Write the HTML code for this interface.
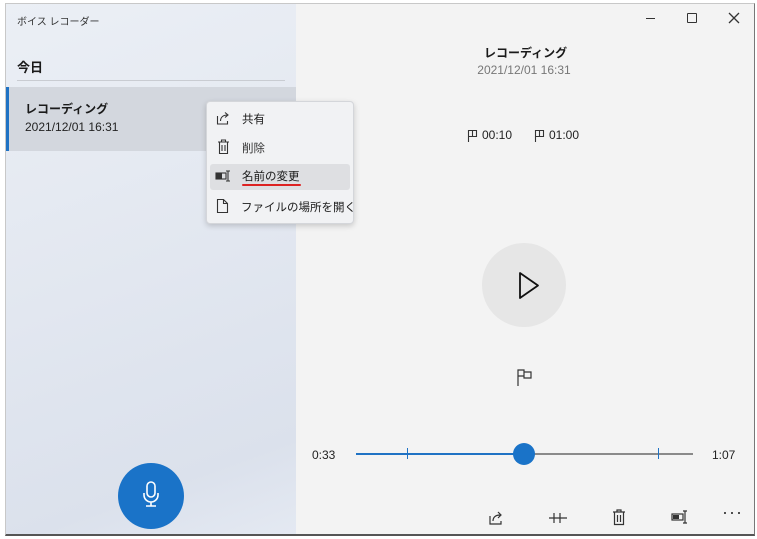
<!DOCTYPE html>
<html><head><meta charset="utf-8"><style>
*{margin:0;padding:0;box-sizing:border-box}
body{width:757px;height:539px;background:#fff;position:relative;overflow:hidden;font-family:"Liberation Sans","Noto Sans CJK JP",sans-serif;color:#1a1a1a}
.win{position:absolute;left:5px;top:3px;width:750px;height:533px;background:#f3f3f3;border:1px solid #c8c8c8;border-right:1px solid #777;border-bottom:2px solid #555;overflow:hidden}
.left{position:absolute;left:0;top:0;width:290px;height:100%;background:linear-gradient(160deg,#ebeff5 0%,#e2e7f0 50%,#dbe1ec 85%,#e4e9f2 100%)}
.abs{position:absolute;white-space:nowrap}
svg{position:absolute}
.mi{font-size:11.5px}
</style></head><body>
<div class="win">
 <div class="left">
  <div class="abs" style="left:11px;top:9px;font-size:10px;color:#333">ボイス レコーダー</div>
  <div class="abs" style="left:11px;top:53px;font-size:13px;font-weight:bold">今日</div>
  <div class="abs" style="left:11px;top:76px;width:268px;height:1px;background:#c9ccd2"></div>
  <div class="abs" style="left:0;top:83px;width:290px;height:64px;background:#d3d7de"></div>
  <div class="abs" style="left:0;top:83px;width:3px;height:64px;background:#1f72c4"></div>
  <div class="abs" style="left:19px;top:96px;font-size:12px;font-weight:bold">レコーディング</div>
  <div class="abs" style="left:19px;top:116px;font-size:12px;color:#222">2021/12/01 16:31</div>
  <div class="abs" style="left:112px;top:459px;width:66px;height:66px;border-radius:50%;background:#1a73c8"></div>
  <svg style="left:134px;top:476px" width="22" height="30" viewBox="0 0 22 30"><rect x="7" y="2" width="8" height="15" rx="4" fill="none" stroke="#fff" stroke-width="1.6"/><path d="M4 13v2a7 7 0 0 0 14 0v-2M11 22v4M6 26h10" fill="none" stroke="#fff" stroke-width="1.6"/></svg>
 </div>
 <div class="abs" style="left:640px;top:14px;width:9px;height:1px;background:#333"></div>
 <div class="abs" style="left:681px;top:9px;width:10px;height:10px;border:1.3px solid #333;border-radius:1px"></div>
 <svg style="left:722px;top:8px" width="12" height="12"><path d="M1 1L11 11M11 1L1 11" stroke="#333" stroke-width="1.3"/></svg>
 <div class="abs" style="left:478px;top:40px;font-size:12px;font-weight:bold;width:80px;text-align:center">レコーディング</div>
 <div class="abs" style="left:463px;top:59px;font-size:12px;color:#777;width:110px;text-align:center">2021/12/01 16:31</div>
 <svg style="left:461px;top:125px" width="12" height="14"><path d="M1.5 13V1.5h8v6h-8" fill="none" stroke="#333" stroke-width="1.1"/><path d="M5.5 1.5v6" stroke="#333" stroke-width="1.1"/></svg>
 <div class="abs" style="left:476px;top:124px;font-size:12px;color:#222">00:10</div>
 <svg style="left:528px;top:125px" width="12" height="14"><path d="M1.5 13V1.5h8v6h-8" fill="none" stroke="#333" stroke-width="1.1"/><path d="M5.5 1.5v6" stroke="#333" stroke-width="1.1"/></svg>
 <div class="abs" style="left:543px;top:124px;font-size:12px;color:#222">01:00</div>
 <div class="abs" style="left:476px;top:239px;width:84px;height:84px;border-radius:50%;background:#e6e6e6"></div>
 <svg style="left:512px;top:267px" width="24" height="30"><path d="M2 2L20 14.5L2 27Z" fill="none" stroke="#111" stroke-width="1.8" stroke-linejoin="round"/></svg>
 <svg style="left:510px;top:363px" width="18" height="20"><path d="M2 19V3h6v6H2M8 5h7v6H8V9" fill="none" stroke="#333" stroke-width="1.2"/></svg>
 <div class="abs" style="left:306px;top:444px;font-size:12px;color:#222">0:33</div>
 <div class="abs" style="left:350px;top:449px;width:167px;height:2px;background:#1f72c4"></div>
 <div class="abs" style="left:517px;top:449px;width:170px;height:2px;background:#8a8a8a"></div>
 <div class="abs" style="left:401px;top:444px;width:1px;height:11px;background:#1f72c4"></div>
 <div class="abs" style="left:652px;top:444px;width:1px;height:11px;background:#1f72c4"></div>
 <div class="abs" style="left:507px;top:439px;width:22px;height:22px;border-radius:50%;background:#1a73c8"></div>
 <div class="abs" style="left:706px;top:444px;font-size:12px;color:#222">1:07</div>
 <svg style="left:482px;top:506px" width="16" height="16"><path d="M2 6v8h11v-3" fill="none" stroke="#333" stroke-width="1.2"/><path d="M5 11c0-4 3-6 7-6M10 2l3 3-3 3" fill="none" stroke="#333" stroke-width="1.2"/></svg>
 <svg style="left:543px;top:507px" width="18" height="14"><path d="M0 7h18M5 2v10M11 2v10" stroke="#333" stroke-width="1.2"/></svg>
 <svg style="left:606px;top:505px" width="14" height="17"><path d="M1 3h12M5 3V1h4v2M2.5 3v12.5h9V3M5.5 6v7M8.5 6v7" fill="none" stroke="#333" stroke-width="1.2"/></svg>
 <svg style="left:665px;top:506px" width="18" height="14"><rect x="1" y="4" width="11" height="6" fill="none" stroke="#333" stroke-width="1.2"/><rect x="2" y="5" width="6" height="4" fill="#333"/><path d="M14 1v12M12 1h4M12 13h4" stroke="#333" stroke-width="1.2"/></svg>
 <div class="abs" style="left:716px;top:498px;font-size:18px;color:#333;letter-spacing:1px">···</div>
</div>
<div class="abs" style="left:206px;top:101px;width:148px;height:123px;background:#f1f2f4;border:1px solid #d4d6da;border-radius:4px;box-shadow:0 2px 6px rgba(0,0,0,0.18)">
 <div class="abs" style="left:3px;top:62px;width:140px;height:26px;background:#dedfe2;border-radius:3px"></div>
</div>
<svg style="left:216px;top:111px" width="15" height="15"><path d="M1.5 5v8h10v-3" fill="none" stroke="#333" stroke-width="1.1"/><path d="M4.5 10c0-4 3-6 7-6M9 1.5l3 2.5-3 2.5" fill="none" stroke="#333" stroke-width="1.1"/></svg>
<div class="abs mi" style="left:242px;top:111px">共有</div>
<svg style="left:217px;top:139px" width="13" height="16"><path d="M1 3h11M4.5 3V1h4v2M2.5 3v11.5h8V3M5 6v6M8 6v6" fill="none" stroke="#333" stroke-width="1.1"/></svg>
<div class="abs mi" style="left:242px;top:140px;color:#333">削除</div>
<svg style="left:215px;top:170px" width="17" height="12"><rect x="1" y="3" width="10" height="6" fill="none" stroke="#333" stroke-width="1.1"/><rect x="1" y="3" width="6" height="6" fill="#333"/><path d="M13 1v10M11 1h4M11 11h4" stroke="#333" stroke-width="1.1"/></svg>
<div class="abs mi" style="left:242px;top:168px">名前の変更</div>
<div class="abs" style="left:242px;top:184px;width:59px;height:2px;background:#d22;border-radius:1px"></div>
<svg style="left:216px;top:198px" width="13" height="16"><path d="M1.5 1.5h6l4 4v9h-10z M7.5 1.5v4h4" fill="none" stroke="#333" stroke-width="1.1"/></svg>
<div class="abs mi" style="left:241px;top:199px">ファイルの場所を開く</div>
</body></html>
